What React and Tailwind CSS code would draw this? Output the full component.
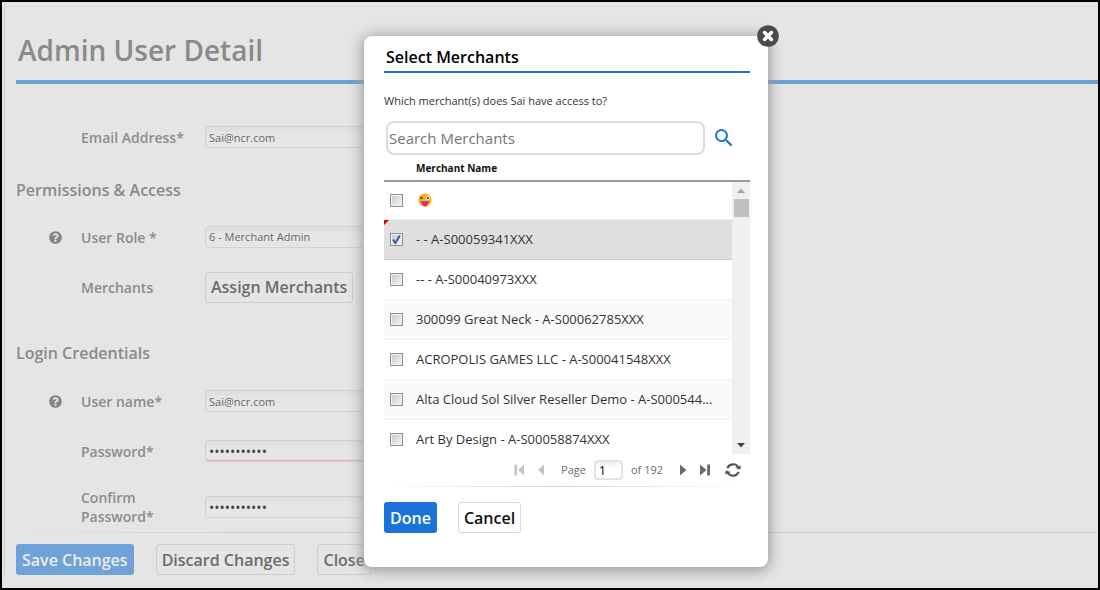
import React, { useState } from 'react';
import { FaQuestionCircle } from 'react-icons/fa';
import { MdSearch } from 'react-icons/md';

const MERCHANTS = [
  { id: 1, name: '', emoji: true },
  { id: 2, name: '- - A-S00059341XXX' },
  { id: 3, name: '-- - A-S00040973XXX' },
  { id: 4, name: '300099 Great Neck - A-S00062785XXX' },
  { id: 5, name: 'ACROPOLIS GAMES LLC - A-S00041548XXX' },
  { id: 6, name: 'Alta Cloud Sol Silver Reseller Demo - A-S000544...' },
  { id: 7, name: 'Art By Design - A-S00058874XXX' },
];

const fieldClass =
  'h-[22px] w-[330px] appearance-none rounded-sm border border-[#d0d2d2] bg-linear-to-b from-[#dcdfdf] to-[#e6e6e6] to-40% px-[3px] outline-none';
const textField = 'text-[11px] text-[#686868]';
const passwordField = 'text-sm text-[#444]';

const plainButton =
  'h-[31px] rounded-[3px] border border-[#cfcfcf] px-[5px] text-base font-semibold text-[#6c6c6c]';

const WinkEmoji = () => (
  <svg width="14" height="14" viewBox="0 0 14 14" role="img" aria-label="winking face with tongue">
    <circle cx="7" cy="7" r="6.6" fill="#fbb11e" />
    <path d="M2 4.2 L4.8 5 L2.4 6" fill="none" stroke="#5b3a16" strokeWidth="1" />
    <circle cx="9.8" cy="5" r="2" fill="#fff" />
    <circle cx="9.8" cy="5.1" r="1" fill="#3b2a1a" />
    <path d="M2.6 8 Q7 9.4 11.4 8 Q10.6 10.4 9.4 11 L4.6 11 Q3.2 10.2 2.6 8Z" fill="#a8442b" />
    <path d="M4.4 8.6 H9.6 V11 Q9.4 13.4 7 13.4 Q4.6 13.4 4.4 11Z" fill="#f0189a" />
  </svg>
);

const RefreshIcon = () => (
  <svg width="16" height="16" viewBox="0 0 16 16">
    <path d="M2.4 6.2 A6 6 0 0 1 13.2 5.2" fill="none" stroke="#555" strokeWidth="2.2" />
    <path d="M13.6 9.8 A6 6 0 0 1 2.8 10.8" fill="none" stroke="#555" strokeWidth="2.2" />
    <path d="M10 6 L15.8 3.4 L15.4 7.4Z" fill="#555" />
    <path d="M6 10 L0.2 12.6 L0.6 8.6Z" fill="#555" />
  </svg>
);

// label + field row of the form on the page
const Row = ({ id, label, help, children }) => (
  <div className="flex h-[50px] items-center">
    <span className="w-[33px] shrink-0" />
    <span className="w-8 shrink-0">
      {help && <FaQuestionCircle size={13} className="text-[#858585]" aria-hidden="true" />}
    </span>
    <label htmlFor={id} className="w-[124px] shrink-0 pr-5 text-sm leading-[19px] font-semibold text-[#8c8c8c]">
      {label}
    </label>
    {children}
  </div>
);

const SectionTitle = ({ children }) => (
  <h2 className="text-base leading-6 font-semibold text-[#8a8a8a]">{children}</h2>
);

const SelectMerchants = () => {
  const [selected, setSelected] = useState([2]);
  const [search, setSearch] = useState('');
  const [page, setPage] = useState('1');

  const toggle = (id) =>
    setSelected(selected.includes(id) ? selected.filter((x) => x !== id) : [...selected, id]);

  return (
    <div
      role="dialog"
      aria-labelledby="dialog-title"
      className="relative w-[404px] rounded-lg bg-white pt-2 pr-[18px] pb-[34px] pl-5 shadow-[0_2px_14px_2px_#999]"
    >
      <button type="button" aria-label="Close dialog" className="absolute -top-3 -right-3 size-6">
        <svg width="24" height="24" viewBox="0 0 24 24">
          <circle cx="12" cy="12" r="10.8" fill="#4a4b4d" />
          <path d="M8.6 8.6 L15.4 15.4 M15.4 8.6 L8.6 15.4" stroke="#fff" strokeWidth="3.6" strokeLinecap="round" />
        </svg>
      </button>

      <h2 id="dialog-title" className="border-b-2 border-[#1a73d8] px-[2px] pt-px pb-[2px] text-base leading-6 font-semibold text-black">
        Select Merchants
      </h2>
      <p className="mt-[18px] text-[11px] leading-5 text-[#333]">Which merchant(s) does Sai have access to?</p>

      <div className="mt-[10px] flex items-center pl-[2px]">
        <input
          type="text"
          aria-label="Search Merchants"
          placeholder="Search Merchants"
          value={search}
          onChange={(e) => setSearch(e.target.value)}
          className="h-[34px] min-w-0 flex-1 rounded-lg border-2 border-[#dadae6] px-px text-[15px] text-[#333] outline-none placeholder:text-[#757575]"
        />
        <button type="button" aria-label="Search" className="mr-[14px] ml-[7px] text-[#1a73d8]">
          <MdSearch size={24} />
        </button>
      </div>

      {/* grid header */}
      <table className="w-full border-b-2 border-[#999]">
        <thead>
          <tr className="h-[26px]">
            <th scope="col" className="pl-[32px] text-left text-[10px] leading-4 font-bold text-[#111]">
              Merchant Name
            </th>
          </tr>
        </thead>
      </table>

      {/* grid body */}
      <div className="flex h-[272px]">
        <div className="min-w-0 flex-1 overflow-hidden">
          <table className="w-full table-fixed">
            <tbody>
              {MERCHANTS.map((m, i) => {
                const checked = selected.includes(m.id);
                return (
                  <tr
                    key={m.id}
                    className={`h-10 border-b first:h-[37px] ${
                      checked
                        ? 'border-[#d0d0d0] bg-[#dfdfdf]'
                        : i % 2 === 1
                          ? 'border-[#f0f0f0] bg-[#fafafa]'
                          : 'border-[#f0f0f0] bg-white'
                    }`}
                  >
                    <td className="relative w-8 pl-[6px]">
                      {checked && (
                        <svg className="absolute top-0 left-0" width="5" height="5" viewBox="0 0 5 5">
                          <path d="M0 0 H5 L0 5Z" fill="#d00" />
                        </svg>
                      )}
                      <span className="relative block size-[13px]">
                        <input
                          type="checkbox"
                          id={`merchant-${m.id}`}
                          checked={checked}
                          onChange={() => toggle(m.id)}
                          className="block size-[13px] appearance-none border border-[#8e8f8f] bg-linear-to-br from-[#c4c8cc] to-[#f6f6f6] shadow-[inset_0_0_0_1px_#f0f0f0]"
                        />
                        {checked && (
                          <svg className="pointer-events-none absolute inset-0" width="13" height="13" viewBox="0 0 13 13">
                            <path d="M3 6.5 L5.4 10 L9.8 2.6" fill="none" stroke="#3b55a5" strokeWidth="2" />
                          </svg>
                        )}
                      </span>
                    </td>
                    <td>
                      <label htmlFor={`merchant-${m.id}`} className="block truncate text-[13px] leading-5 text-[#333]">
                        {m.emoji ? (
                          <span className="block pl-[2px]">
                            <WinkEmoji />
                          </span>
                        ) : (
                          m.name
                        )}
                      </label>
                    </td>
                  </tr>
                );
              })}
            </tbody>
          </table>
        </div>
        <div className="flex w-[18px] flex-col items-center bg-[#f0f0f0]">
          <svg className="mt-[6px]" width="8" height="5" viewBox="0 0 8 5">
            <path d="M0 5 L4 0.6 L8 5Z" fill="#a3a3a3" />
          </svg>
          <div className="mt-[6px] h-[18px] w-[15px] bg-[#c1c1c1]" />
          <svg className="mt-auto mb-[6px]" width="8" height="5" viewBox="0 0 8 5">
            <path d="M0 0 H8 L4 4.4Z" fill="#404040" />
          </svg>
        </div>
      </div>

      {/* paging */}
      <div className="flex h-8 items-center justify-end pr-[9px] text-[11px] text-[#6b6b6b]">
        <button type="button" aria-label="First page">
          <svg width="11" height="12" viewBox="0 0 11 12">
            <path d="M0.5 0.5 H3 V11.5 H0.5Z M10 0.5 V11.5 L4 6Z" fill="#c4c4c4" />
          </svg>
        </button>
        <button type="button" aria-label="Previous page" className="ml-3">
          <svg width="8" height="12" viewBox="0 0 8 12">
            <path d="M7 0.5 V11.5 L1 6Z" fill="#c4c4c4" />
          </svg>
        </button>
        <label htmlFor="page" className="ml-4">Page</label>
        <input
          id="page"
          value={page}
          onChange={(e) => setPage(e.target.value)}
          className="ml-2 h-5 w-[29px] rounded-sm border-2 border-[#dfe3e3] bg-linear-to-b from-[#eef1f1] to-white to-40% px-[3px] text-xs text-black outline-none"
        />
        <span className="ml-2">of 192</span>
        <button type="button" aria-label="Next page" className="ml-4">
          <svg width="8" height="12" viewBox="0 0 8 12">
            <path d="M1 0.5 V11.5 L7.4 6Z" fill="#6a6a6a" />
          </svg>
        </button>
        <button type="button" aria-label="Last page" className="ml-3">
          <svg width="12" height="12" viewBox="0 0 12 12">
            <path d="M1 0.5 V11.5 L7.6 6Z M8.2 0.5 H11 V11.5 H8.2Z" fill="#6a6a6a" />
          </svg>
        </button>
        <button type="button" aria-label="Refresh" className="ml-[14px]">
          <RefreshIcon />
        </button>
      </div>
      <div className="mr-[9px] h-px bg-linear-to-r from-transparent via-[#d4d4d4] to-transparent" />

      <div className="mt-[15px] flex gap-[21px]">
        <button type="button" className="h-[31px] rounded-[3px] bg-[#1a73d8] px-[6px] text-base font-semibold text-white">
          Done
        </button>
        <button type="button" className="h-[31px] rounded-[3px] border border-[#d8d8d8] bg-white px-[5px] text-base font-semibold text-[#111]">
          Cancel
        </button>
      </div>
    </div>
  );
};

const App = () => {
  const [email, setEmail] = useState('Sai@ncr.com');
  const [userName, setUserName] = useState('Sai@ncr.com');
  const [password, setPassword] = useState('merchant123');
  const [confirm, setConfirm] = useState('merchant123');

  return (
    <div className="relative min-h-screen border-2 border-black bg-[#e5e5e5] font-['Open_Sans','Noto_Sans',sans-serif]">
      <div className="ml-[2px] border-l border-[#d2d2d2] pt-1">
        <main className="border-t border-[#d4d4d4] pl-[11px]">
          <h1 className="border-b-4 border-[#6c9fd2] px-[2px] pt-[25px] pb-3 text-[28px] leading-9 font-semibold text-[#8a8a8a]">
            Admin User Detail
          </h1>

          <form>
            <div className="pt-7">
              <Row id="email" label="Email Address*">
                <input id="email" type="text" value={email} onChange={(e) => setEmail(e.target.value)} className={`${fieldClass} ${textField}`} />
              </Row>
            </div>

            <section className="pt-4">
              <SectionTitle>Permissions &amp; Access</SectionTitle>
              <div className="pt-[10px]">
                <Row id="role" label="User Role *" help>
                  <select id="role" className={`${fieldClass} ${textField}`}>
                    <option>6 - Merchant Admin</option>
                  </select>
                </Row>
                <Row id="merchants" label="Merchants">
                  <button id="merchants" type="button" className={plainButton}>
                    Assign Merchants
                  </button>
                </Row>
              </div>
            </section>

            <section className="pt-[29px]">
              <SectionTitle>Login Credentials</SectionTitle>
              <div className="pt-[11px]">
                <Row id="username" label="User name*" help>
                  <input id="username" type="text" value={userName} onChange={(e) => setUserName(e.target.value)} className={`${fieldClass} ${textField}`} />
                </Row>
                <Row id="password" label="Password*">
                  <div className="relative flex">
                    <input id="password" type="password" value={password} onChange={(e) => setPassword(e.target.value)} className={`${fieldClass} ${passwordField}`} />
                    {/* invalid underline */}
                    <svg className="absolute bottom-0 left-px" width="328" height="3">
                      <defs>
                        <pattern id="wave" width="4" height="3" patternUnits="userSpaceOnUse">
                          <path d="M0 2.5 L2 0.5 L4 2.5" fill="none" stroke="#ea8f8f" strokeWidth="1" />
                        </pattern>
                      </defs>
                      <rect width="328" height="3" fill="url(#wave)" />
                    </svg>
                  </div>
                </Row>
                <div className="pt-[6px]">
                  <Row id="confirm" label="Confirm Password*">
                    <input id="confirm" type="password" value={confirm} onChange={(e) => setConfirm(e.target.value)} className={`${fieldClass} ${passwordField}`} />
                  </Row>
                </div>
              </div>
            </section>

            <div className="h-px bg-linear-to-r from-transparent to-[#cfcfcf] to-20%" />
            <div className="flex gap-[22px] pt-[11px]">
              <button type="button" className="h-[31px] rounded-[3px] bg-[#6fa2d6] px-[6px] text-base font-semibold text-[#ececec]">
                Save Changes
              </button>
              <button type="button" className={plainButton}>Discard Changes</button>
              <button type="button" className={plainButton}>Close</button>
            </div>
          </form>
        </main>
      </div>

      <div className="absolute inset-0 flex items-start justify-center pt-[34px] pl-8">
        <SelectMerchants />
      </div>
    </div>
  );
};

export default App;
